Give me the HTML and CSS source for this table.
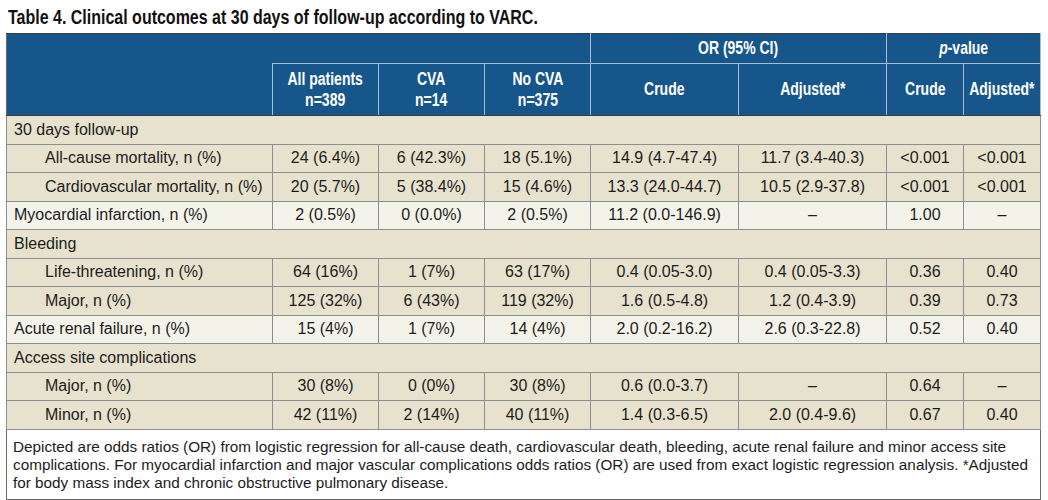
FILE: index.html
```html
<!DOCTYPE html>
<html lang="en">
<head>
<meta charset="utf-8">
<title>Table 4</title>
<link rel="stylesheet" href="styles.css">
</head>
<body>
<div class="page">
  <h1 class="title"><span class="cond-l">Table 4. Clinical outcomes at 30 days of follow-up according to VARC.</span></h1>
  <table class="tbl">
    <colgroup>
      <col class="c-label">
      <col class="c-n"><col class="c-n"><col class="c-n">
      <col class="c-or"><col class="c-or">
      <col class="c-p"><col class="c-p">
    </colgroup>
    <thead>
      <tr class="h1">
        <th class="h-blank" rowspan="2"></th>
        <th class="h-span" colspan="3"></th>
        <th colspan="2"><span class="cond">OR (95% CI)</span></th>
        <th colspan="2"><span class="cond"><i>p</i>-value</span></th>
      </tr>
      <tr class="h2">
        <th><span class="cond">All patients<br>n=389</span></th>
        <th><span class="cond">CVA<br>n=14</span></th>
        <th><span class="cond">No CVA<br>n=375</span></th>
        <th><span class="cond">Crude</span></th>
        <th><span class="cond">Adjusted*</span></th>
        <th><span class="cond">Crude</span></th>
        <th><span class="cond">Adjusted*</span></th>
      </tr>
    </thead>
    <tbody>
      <tr class="sec"><td colspan="8">30 days follow-up</td></tr>
      <tr class="dk"><td class="ind">All-cause mortality, n (%)</td><td>24 (6.4%)</td><td>6 (42.3%)</td><td>18 (5.1%)</td><td>14.9 (4.7-47.4)</td><td>11.7 (3.4-40.3)</td><td>&lt;0.001</td><td>&lt;0.001</td></tr>
      <tr class="dk"><td class="ind">Cardiovascular mortality, n (%)</td><td>20 (5.7%)</td><td>5 (38.4%)</td><td>15 (4.6%)</td><td>13.3 (24.0-44.7)</td><td>10.5 (2.9-37.8)</td><td>&lt;0.001</td><td>&lt;0.001</td></tr>
      <tr class="lt"><td>Myocardial infarction, n (%)</td><td>2 (0.5%)</td><td>0 (0.0%)</td><td>2 (0.5%)</td><td>11.2 (0.0-146.9)</td><td>–</td><td>1.00</td><td>–</td></tr>
      <tr class="sec"><td colspan="8">Bleeding</td></tr>
      <tr class="dk"><td class="ind">Life-threatening, n (%)</td><td>64 (16%)</td><td>1 (7%)</td><td>63 (17%)</td><td>0.4 (0.05-3.0)</td><td>0.4 (0.05-3.3)</td><td>0.36</td><td>0.40</td></tr>
      <tr class="dk"><td class="ind">Major, n (%)</td><td>125 (32%)</td><td>6 (43%)</td><td>119 (32%)</td><td>1.6 (0.5-4.8)</td><td>1.2 (0.4-3.9)</td><td>0.39</td><td>0.73</td></tr>
      <tr class="lt"><td>Acute renal failure, n (%)</td><td>15 (4%)</td><td>1 (7%)</td><td>14 (4%)</td><td>2.0 (0.2-16.2)</td><td>2.6 (0.3-22.8)</td><td>0.52</td><td>0.40</td></tr>
      <tr class="sec"><td colspan="8">Access site complications</td></tr>
      <tr class="dk"><td class="ind">Major, n (%)</td><td>30 (8%)</td><td>0 (0%)</td><td>30 (8%)</td><td>0.6 (0.0-3.7)</td><td>–</td><td>0.64</td><td>–</td></tr>
      <tr class="dk"><td class="ind">Minor, n (%)</td><td>42 (11%)</td><td>2 (14%)</td><td>40 (11%)</td><td>1.4 (0.3-6.5)</td><td>2.0 (0.4-9.6)</td><td>0.67</td><td>0.40</td></tr>
    </tbody>
    <tfoot>
      <tr class="foot"><td colspan="8">Depicted are odds ratios (OR) from logistic regression for all-cause death, cardiovascular death, bleeding, acute renal failure and minor access site complications. For myocardial infarction and major vascular complications odds ratios (OR) are used from exact logistic regression analysis. *Adjusted for body mass index and chronic obstructive pulmonary disease.</td></tr>
    </tfoot>
  </table>
</div>
</body>
</html>
```
FILE: styles.css
```css
html, body {
  margin: 0;
  padding: 0;
  background: #ffffff;
}

.page {
  padding: 6px 8px 0 6px;
  font-family: "Liberation Sans", Arial, sans-serif;
  color: #1a1a1a;
}

.title {
  margin: 0 0 4px 2px;
  height: 23px;
  line-height: 22px;
  font-family: "Liberation Sans", Arial, sans-serif;
  font-weight: 700;
  font-size: 19.5px;
  color: #111;
  white-space: nowrap;
}

.cond-l {
  display: inline-block;
  transform: scaleX(0.82);
  transform-origin: left center;
}

.cond {
  display: inline-block;
  margin: 0 -12px;
  transform: scaleX(0.8);
  transform-origin: center center;
  white-space: nowrap;
}

.tbl {
  border-collapse: collapse;
  table-layout: fixed;
  width: 1034px;
  border: 1px solid #6b6b6b;
}

.c-label { width: 266px; }
.c-n { width: 106px; }
.c-or { width: 148px; }
.c-p { width: 77px; }

.tbl thead th {
  background: #17568b;
  color: #ffffff;
  font-family: "Liberation Sans", Arial, sans-serif;
  font-weight: 700;
  font-size: 17.5px;
  line-height: 21px;
  text-align: center;
  vertical-align: middle;
  padding: 0;
  border: 1px solid #a6bdd2;
}

.tbl thead tr.h1 th { height: 29px; border-top: 1px solid #3a3a3a; }
.tbl thead tr.h2 th { height: 51px; border-bottom: 1px solid #3a3a3a; }
.tbl thead th.h-blank {
  border-left: 1px solid #6b6b6b;
  border-right: none;
  border-top: 1px solid #3a3a3a;
  border-bottom: 1px solid #3a3a3a;
}
.tbl thead th.h-span { border-left: none; }
.tbl thead th i { font-style: italic; }

.tbl tbody td {
  font-size: 16px;
  line-height: 20px;
  height: 27.5px;
  padding: 0 4px;
  text-align: center;
  vertical-align: middle;
  border: 1px solid #8e8e8e;
  color: #1c1c1c;
  white-space: nowrap;
}

.tbl tbody td:first-child {
  text-align: left;
  padding-left: 7px;
}

.tbl tbody td.ind { padding-left: 38px; }

.tbl tr.sec td { background: #e6e2cd; }
.tbl tr.dk td { background: #e6e2cd; }
.tbl tr.lt td { background: #f4f3ea; }

.tbl tfoot td {
  background: #ffffff;
  border: 1px solid #6b6b6b;
  font-size: 15.3px;
  line-height: 18px;
  padding: 8px 0 7px 6px;
  color: #1c1c1c;
  text-align: left;
}
```
